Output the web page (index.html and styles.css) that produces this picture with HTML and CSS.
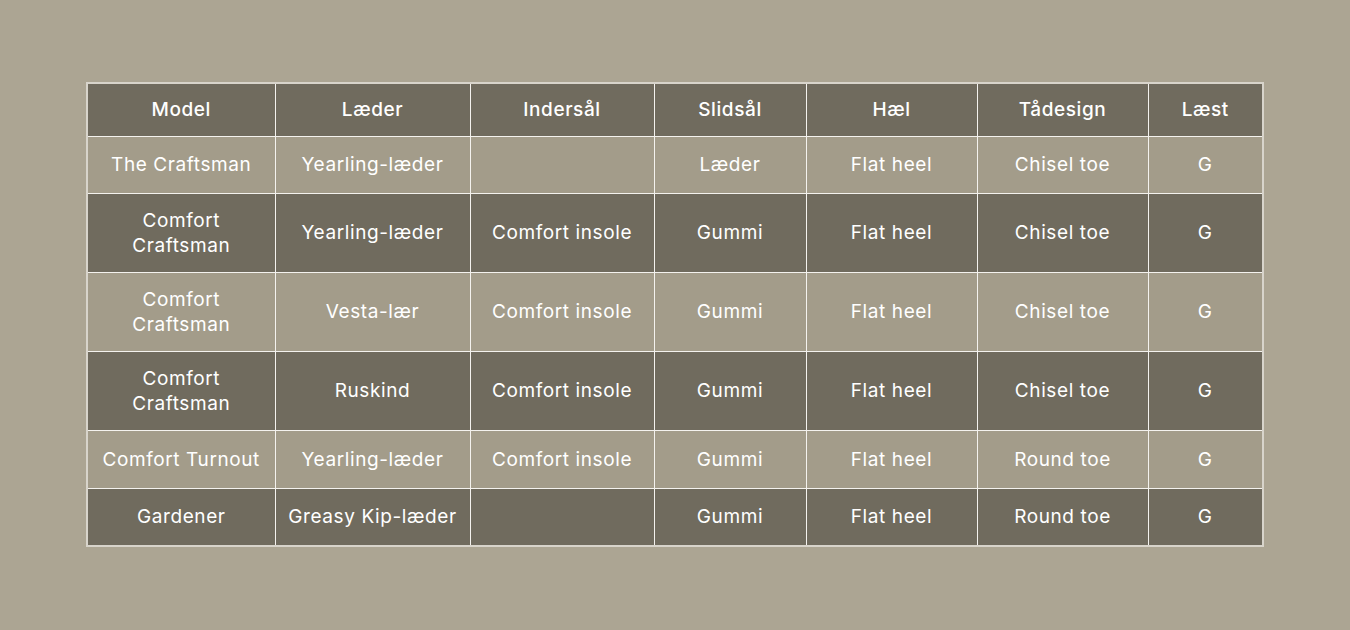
FILE: index.html
```html
<!DOCTYPE html>
<html lang="da">
<head>
<meta charset="utf-8">
<title>Modeller</title>
<link rel="stylesheet" href="styles.css">
</head>
<body>
<div class="wrap">
<table class="spec">
<colgroup>
<col class="c1"><col class="c2"><col class="c3"><col class="c4"><col class="c5"><col class="c6"><col class="c7">
</colgroup>
<thead>
<tr class="head"><th>Model</th><th>Læder</th><th>Indersål</th><th>Slidsål</th><th>Hæl</th><th>Tådesign</th><th>Læst</th></tr>
</thead>
<tbody>
<tr class="light single"><td>The Craftsman</td><td>Yearling-læder</td><td></td><td>Læder</td><td>Flat heel</td><td>Chisel toe</td><td>G</td></tr>
<tr class="dark"><td>Comfort<br>Craftsman</td><td>Yearling-læder</td><td>Comfort insole</td><td>Gummi</td><td>Flat heel</td><td>Chisel toe</td><td>G</td></tr>
<tr class="light"><td>Comfort<br>Craftsman</td><td>Vesta-lær</td><td>Comfort insole</td><td>Gummi</td><td>Flat heel</td><td>Chisel toe</td><td>G</td></tr>
<tr class="dark"><td>Comfort<br>Craftsman</td><td>Ruskind</td><td>Comfort insole</td><td>Gummi</td><td>Flat heel</td><td>Chisel toe</td><td>G</td></tr>
<tr class="light single tall"><td>Comfort Turnout</td><td>Yearling-læder</td><td>Comfort insole</td><td>Gummi</td><td>Flat heel</td><td>Round toe</td><td>G</td></tr>
<tr class="dark single tall"><td>Gardener</td><td>Greasy Kip-læder</td><td></td><td>Gummi</td><td>Flat heel</td><td>Round toe</td><td>G</td></tr>
</tbody>
</table>
</div>
</body>
</html>
```
FILE: styles.css
```css
html, body {
  margin: 0;
  padding: 0;
  background: #aca593;
}
body {
  font-family: Inter, "Noto Sans", "Liberation Sans", sans-serif;
  color: #ffffff;
}
.wrap {
  padding: 82px 0 0 86px;
}
.spec {
  border-collapse: collapse;
  table-layout: fixed;
  width: 1176px;
  border: 2px solid #d8d4cb;
  font-size: 19px;
  letter-spacing: 0.6px;
}
.c1 { width: 188px; }
.c2 { width: 195px; }
.c3 { width: 184px; }
.c4 { width: 152px; }
.c5 { width: 171px; }
.c6 { width: 171px; }
.c7 { width: 115px; }
.spec th, .spec td {
  border: 1px solid #f4f2ee;
  text-align: center;
  vertical-align: middle;
  padding: 14px 6px;
  line-height: 25px;
}
.spec th {
  font-weight: 500;
  padding: 0 6px;
}
.head { height: 53px; background: #706b5e; }
.single { height: 57px; }
.single.tall { height: 58px; }
.dark { background: #706b5e; }
.light { background: #a39c8a; }
.spec td { font-weight: 400; }
```
